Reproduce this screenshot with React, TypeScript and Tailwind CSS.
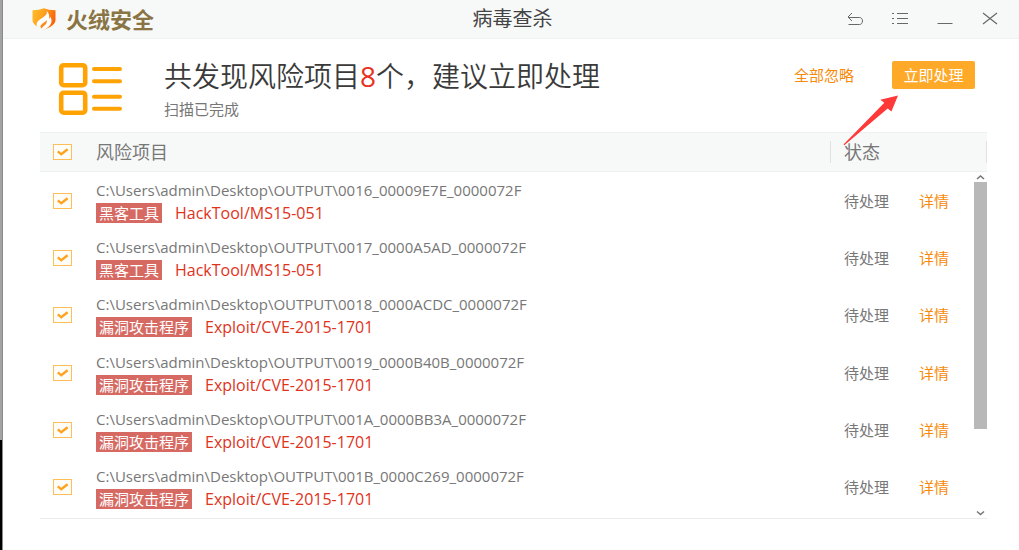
import { useState } from "react";
import type { ReactNode } from "react";

type Risk = { path: string; tag: string; name: string };

const base = "C:\\Users\\admin\\Desktop\\OUTPUT\\";

const risks: Risk[] = [
  { path: base + "0016_00009E7E_0000072F", tag: "黑客工具", name: "HackTool/MS15-051" },
  { path: base + "0017_0000A5AD_0000072F", tag: "黑客工具", name: "HackTool/MS15-051" },
  { path: base + "0018_0000ACDC_0000072F", tag: "漏洞攻击程序", name: "Exploit/CVE-2015-1701" },
  { path: base + "0019_0000B40B_0000072F", tag: "漏洞攻击程序", name: "Exploit/CVE-2015-1701" },
  { path: base + "001A_0000BB3A_0000072F", tag: "漏洞攻击程序", name: "Exploit/CVE-2015-1701" },
  { path: base + "001B_0000C269_0000072F", tag: "漏洞攻击程序", name: "Exploit/CVE-2015-1701" },
];

function Logo() {
  return (
    <svg viewBox="0 0 24 22" className="h-[22px] w-6" aria-hidden="true">
      <defs>
        <linearGradient id="shield" x1="0" y1="0" x2="1" y2="0.3">
          <stop offset="0" stopColor="#ffbe2b" />
          <stop offset="0.5" stopColor="#fda21e" />
          <stop offset="1" stopColor="#f9660c" />
        </linearGradient>
      </defs>
      <path
        d="M.5 2.200C5 2.200 9 1.600 12 .3c3 1.300 7 1.900 11.500 1.900v9.800c0 4-5 7.500-11.500 9.700C5.500 19.500.5 16 .5 12z"
        fill="url(#shield)"
      />
      <path
        d="M14.800 3c.5 2.600-.7 4.100-3 5.800C8.600 11.200 4.800 13 4.600 16.300c0 .9.200 1.700.7 2.500 1.800 1.200 4.200 2.300 6.700 3.100 3.600-1.700 7.500-5 7.500-8.900 0-1.800-.4-3-1-4.200-.2 1-.6 1.700-1.300 2.300.3-3-.1-6.100-2.400-8.100z"
        fill="#fff"
      />
      <path d="M14.400 12c-.8 2-4.600 3.500-5.700 5.400-.4.800-.4 1.600 0 2.300l1.300.7c.3-2.100 4-3.400 4.600-5.700.2-.9.200-1.800-.2-2.700z" fill="#fb8a16" />
    </svg>
  );
}

function ReportIcon() {
  return (
    <svg viewBox="0 0 66 54" className="h-[54px] w-[66px]" fill="none" stroke="#ffa305" strokeLinecap="round" aria-hidden="true">
      <rect x="3.200" y="3.200" width="24" height="20" rx="2.500" strokeWidth="4.600" />
      <rect x="3.200" y="30.700" width="24" height="20" rx="2.500" strokeWidth="4.600" />
      <path d="M36 7h26M36 19.200h26M36 34.700h26M36 46.800h26" strokeWidth="4" />
    </svg>
  );
}

function WindowButton({ label, children }: { label: string; children: ReactNode }) {
  return (
    <button type="button" aria-label={label} className="flex h-6 w-[45px] items-center justify-center">
      <svg viewBox="0 0 18 14" className="h-[14px] w-[18px]" fill="none" stroke="#666969" strokeWidth="1" aria-hidden="true">
        {children}
      </svg>
    </button>
  );
}

function Check({ label, checked, onChange }: { label: string; checked: boolean; onChange: () => void }) {
  return (
    <label className="grid w-[19px]">
      <input
        type="checkbox"
        aria-label={label}
        checked={checked}
        onChange={onChange}
        className="peer col-start-1 row-start-1 h-4 w-[19px] appearance-none border border-[#ffbe58] bg-[#fffdf8]"
      />
      <svg
        viewBox="0 0 19 16"
        className="pointer-events-none invisible col-start-1 row-start-1 h-4 w-[19px] peer-checked:visible"
        fill="none"
        stroke="#ffa21d"
        strokeWidth="2.400"
        aria-hidden="true"
      >
        <path d="M4.800 7.300l3.500 3 6.300-5" />
      </svg>
    </label>
  );
}

export default function App() {
  const [picked, setPicked] = useState<boolean[]>(risks.map(() => true));
  const all = picked.every(Boolean);

  return (
    <div className="flex h-screen bg-white font-['Open_Sans','Noto_Sans_CJK_SC',sans-serif] text-[15px] leading-5 text-[#777]">
      <div className="flex w-[3px] shrink-0 flex-col border-r border-[#8b8b8b]" aria-hidden="true">
        <div className="h-4/5 bg-[#a3a3a3]" />
        <div className="flex-1 bg-black" />
      </div>

      <div className="flex min-w-0 flex-1 flex-col">
        <header className="grid h-[39px] shrink-0 grid-cols-[1fr_auto_1fr] items-center border-b border-[#f0f2f2] bg-[#f7f9f9] pb-px pl-[3px]">
          <div className="flex items-center gap-[10px] pl-[26px]">
            <Logo />
            <span className="text-[22px] leading-6 font-bold text-[#8a7444]">火绒安全</span>
          </div>
          <h1 className="text-xl leading-6 text-[#444]">病毒查杀</h1>
          <div className="flex justify-end pr-[7px]">
            <WindowButton label="返回">
              <path d="M6 1L2 5l4 4M2 5.500h11.500c4 0 4 7 0 7H2.500" />
            </WindowButton>
            <WindowButton label="菜单">
              <path d="M1 1.500h2M1 6.500h2M1 11.500h2M6 1.500h11M6 6.500h11M6 11.500h11" />
            </WindowButton>
            <WindowButton label="最小化">
              <path d="M1.500 11.500h15" />
            </WindowButton>
            <WindowButton label="关闭">
              <path d="M2 1l14 11M16 1L2 12" strokeWidth="1.200" />
            </WindowButton>
          </div>
        </header>

        <section className="flex h-[93px] shrink-0 items-start pt-[22px] pr-11 pl-[55px]">
          <div className="pt-px">
            <ReportIcon />
          </div>
          <div className="min-w-0 flex-1 pl-10">
            <h2 className="text-[28px] leading-[30px] font-[350] text-[#3a3a3a]">
              共发现风险项目<span className="font-normal text-[#e8301c]">8</span>个，建议立即处理
            </h2>
            <p className="pt-2">扫描已完成</p>
          </div>
          <div className="relative z-10 flex items-center gap-[38px]">
            <button type="button" className="text-[#f78a0b]">
              全部忽略
            </button>
            <button type="button" className="h-7 w-[83px] rounded-[2px] bg-[#ffa928] text-white">
              立即处理
            </button>
            <svg viewBox="0 0 56 52" className="pointer-events-none absolute top-[33px] right-[76px] h-[52px] w-14" aria-hidden="true">
              <path d="M55 1.500L37.300 5.800l4 3L.5 50.600l.8.600 43.400-36.600 3.700 2.800z" fill="#ff3838" />
            </svg>
          </div>
        </section>

        <main className="relative mr-8 mb-[31px] ml-[37px] flex min-h-0 flex-1 flex-col border-b border-[#ececec]">
          <table className="flex min-h-0 flex-1 flex-col text-left">
            <thead className="block border-y border-[#edf0f0] bg-[#f7f9f9]">
              <tr className="flex h-[38px] items-center text-lg">
                <th className="w-14 pl-[13px] font-normal">
                  <Check label="全选" checked={all} onChange={() => setPicked(risks.map(() => !all))} />
                </th>
                <th className="flex-1 font-normal">风险项目</th>
                <th className="w-[157px] border-x border-[#dfe2e2] pl-[13px] leading-[22px] font-normal">状态</th>
              </tr>
            </thead>
            <tbody className="flex min-h-0 flex-1 flex-col pb-[2px]">
              {risks.map((r, i) => (
                <tr key={r.path} className="flex flex-1 items-center">
                  <td className="w-14 pl-[13px]">
                    <Check
                      label={r.path}
                      checked={picked[i]}
                      onChange={() => setPicked(picked.map((p, j) => (j === i ? !p : p)))}
                    />
                  </td>
                  <td className="min-w-0 flex-1">
                    <div className="pb-[2px] leading-[22px]">{r.path}</div>
                    <div className="flex items-center gap-[13px] text-[#e0331c]">
                      <span className="bg-[#d66a63] px-[3px] text-white">{r.tag}</span>
                      <span className="text-base leading-5">{r.name}</span>
                    </div>
                  </td>
                  <td className="w-[75px]">待处理</td>
                  <td className="w-[68px]">
                    <a href="#detail" className="text-[#f78a0b]">
                      详情
                    </a>
                  </td>
                </tr>
              ))}
            </tbody>
          </table>
          <div className="absolute top-10 right-0 bottom-0 flex w-[13px] flex-col items-center" aria-hidden="true">
            <svg viewBox="0 0 13 10" className="h-[10px] w-[13px] shrink-0" fill="none" stroke="#777" strokeWidth="1.600">
              <path d="M3 7l3.500-3L10 7" />
            </svg>
            <div className="h-[247px] w-full shrink bg-[#b8b8b8]" />
            <div className="flex-1" />
            <svg viewBox="0 0 13 10" className="h-[10px] w-[13px] shrink-0" fill="none" stroke="#777" strokeWidth="1.600">
              <path d="M3 3.500l3.500 3 3.500-3" />
            </svg>
          </div>
        </main>
      </div>
    </div>
  );
}
